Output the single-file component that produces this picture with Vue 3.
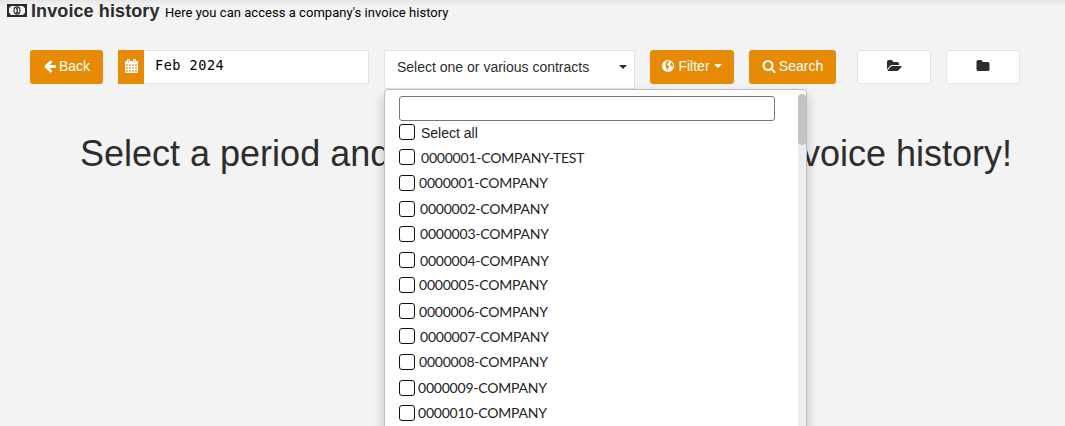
<script setup>
const rows = [
  { label: 'Select all', height: 25, indent: 6, drop: 0, plain: true },
  { label: '0000001-COMPANY-TEST', height: 26, indent: 6, drop: 0 },
  { label: '0000001-COMPANY', height: 26, indent: 4, drop: -1 },
  { label: '0000002-COMPANY', height: 25, indent: 5, drop: -1 },
  { label: '0000003-COMPANY', height: 26, indent: 5, drop: -1 },
  { label: '0000004-COMPANY', height: 25, indent: 5, drop: 0 },
  { label: '0000005-COMPANY', height: 26, indent: 4, drop: -1 },
  { label: '0000006-COMPANY', height: 25, indent: 4, drop: 0 },
  { label: '0000007-COMPANY', height: 26, indent: 5, drop: 0 },
  { label: '0000008-COMPANY', height: 26, indent: 4, drop: -1 },
  { label: '0000009-COMPANY', height: 25, indent: 3, drop: -1 },
  { label: '0000010-COMPANY', height: 26, indent: 3, drop: -1 },
]
</script>

<template>
  <div class="page">
    <header class="title">
      <svg class="money" viewBox="0 0 20 13" fill="none" stroke="#2b2b2b">
        <rect x="1" y="1" width="18" height="11" stroke-width="2" />
        <path d="M1 1H4Q4 4 1 4ZM19 1H16Q16 4 19 4ZM1 12H4Q4 9 1 9ZM19 12H16Q16 9 19 9Z" fill="#2b2b2b" stroke="none" />
        <ellipse cx="10" cy="6.5" rx="3" ry="3.6" stroke-width="1.1" />
        <path d="M9 5L10.2 4.2V8.6M8.8 8.6H11.4" stroke-width="1.2" />
      </svg>
      <h1>Invoice history</h1>
      <small>Here you can access a company's invoice history</small>
    </header>

    <div class="toolbar">
      <button class="btn back">
        <svg class="fa" viewBox="0 0 1792 1792"><path d="M1664 896v128q0 53-32.5 90.5t-84.5 37.5h-704l293 294q38 36 38 90t-38 90l-75 76q-37 37-90 37-52 0-91-37l-651-652q-37-37-37-90 0-52 37-91l651-650q38-38 91-38 52 0 90 38l75 74q38 38 38 91t-38 91l-293 293h704q52 0 84.5 37.5t32.5 90.5z" /></svg>
        <span>Back</span>
      </button>
      <div class="period">
        <span class="addon">
          <svg class="calendar" viewBox="0 0 13 14" fill="#fff">
            <path fill-rule="evenodd" d="M1 2H12Q13 2 13 3V13Q13 14 12 14H1Q0 14 0 13V3Q0 2 1 2ZM1 5V7H3V5ZM4 5V7H6V5ZM7 5V7H9V5ZM10 5V7H12V5ZM1 8V10H3V8ZM4 8V10H6V8ZM7 8V10H9V8ZM10 8V10H12V8ZM1 11V13H3V11ZM4 11V13H6V11ZM7 11V13H9V11ZM10 11V13H12V11Z" />
            <path fill-opacity=".42" d="M1 5H12V13H1Z" />
            <rect x="2" y="0" width="3" height="4" rx="1" />
            <rect x="8" y="0" width="3" height="4" rx="1" />
            <path fill="#e78b07" fill-opacity=".6" d="M3 1H4V3.5H3ZM9 1H10V3.5H9Z" />
          </svg>
        </span>
        <span class="month">Feb 2024</span>
      </div>
      <div class="contracts">
        <div class="select"><span>Select one or various contracts</span><i class="caret"></i></div>
        <div class="menu">
          <div class="filter-box"></div>
          <div v-for="row in rows" :key="row.label" class="row" :class="{ plain: row.plain }" :style="{ height: row.height + 'px' }">
            <span class="check"></span>
            <span class="label" :style="{ marginLeft: row.indent + 'px', marginTop: row.drop + 'px' }">{{ row.label }}</span>
          </div>
          <div class="track"><div class="thumb"></div></div>
        </div>
      </div>
      <button class="btn filter">
        <svg class="globe" viewBox="0 0 12 12">
          <circle cx="6" cy="6" r="6" fill="#fff" />
          <path d="M5.4 1.2L7 1 7.2 2 6 3.2 4.8 4.2 5 5 6.6 5.8 7.2 7 6 8.6 5.4 10.4 4.6 9.2 4.4 7.4 3.4 6.2 3.8 4.2 4 2.4ZM8.8 2.6L9.8 2.8 10.8 4.6 10.8 6.4 9.8 7.2 9.4 6 8.4 5.2 8.2 4Z" fill="#e78b07" />
        </svg>
        <span>Filter</span><i class="caret"></i>
      </button>
      <button class="btn search">
        <svg class="fa" viewBox="0 0 1792 1792"><path d="M1216 832q0-185-131.5-316.5t-316.5-131.5-316.5 131.5-131.5 316.5 131.5 316.5 316.5 131.5 316.5-131.5 131.5-316.5zm512 832q0 52-38 90t-90 38q-54 0-90-38l-343-342q-179 124-399 124-143 0-273.5-55.5t-225-150-150-225-55.5-273.5 55.5-273.5 150-225 225-150 273.5-55.5 273.5 55.5 225 150 150 225 55.5 273.5q0 220-124 399l343 343q37 37 37 90z" /></svg>
        <span>Search</span>
      </button>
      <button class="btn light open">
        <svg class="folder-open" viewBox="0 0 1920 1792"><path d="M1879 952q0 31-31 66l-336 396q-43 51-120.5 86.5t-143.5 35.5h-1088q-34 0-60.5-13t-26.5-43q0-31 31-66l336-396q43-51 120.5-86.5t143.5-35.5h1088q34 0 60.5 13t26.5 43zm-343-344v160h-832q-94 0-197 47.5t-164 119.5l-337 396-5 6q0-4-.5-12.5t-.5-12.5v-960q0-92 66-158t158-66h320q92 0 158 66t66 158v32h544q92 0 158 66t66 158z" /></svg>
      </button>
      <button class="btn light">
        <svg class="folder" viewBox="0 0 1792 1792"><path d="M1728 608v704q0 92-66 158t-158 66h-1216q-92 0-158-66t-66-158v-960q0-92 66-158t158-66h320q92 0 158 66t66 158v32h672q92 0 158 66t66 158z" /></svg>
      </button>
    </div>

    <h2 class="hint"><span>Select a period and</span><span>invoice history!</span></h2>
  </div>
</template>

<style>
body { background: #f3f3f3; overflow: hidden; }
</style>

<style scoped>
* { box-sizing: border-box; }
.page {
  width: 1065px;
  height: 426px;
  overflow: hidden;
  background: linear-gradient(#e6e6e6, #f3f3f3 6px);
  font: 14px/20px "Liberation Sans", Arial, sans-serif;
  color: #2d2d2d;
}
.title { display: flex; height: 50px; padding: 0 0 0 7px; align-items: flex-start; }
.money { width: 20px; height: 13px; margin-top: 4px; }
h1 { margin: 0 0 0 4px; width: 134px; font-size: 18px; line-height: 22px; font-weight: 700; letter-spacing: .1px; white-space: nowrap; }
small { font: 13px/20px Roboto, sans-serif; letter-spacing: .04px; color: #000; margin-top: 3px; white-space: nowrap; }
.toolbar { display: flex; align-items: flex-start; padding-left: 30px; height: 84px; }
.btn {
  display: flex; align-items: center; justify-content: center;
  height: 34px; padding: 0 0 2px; border: 0; border-radius: 3px;
  background: #e78b07; color: #fff; font: inherit; white-space: nowrap;
}
.fa { width: 14px; height: 14px; fill: currentColor; flex: none; }
.calendar { width: 13px; height: 14px; }
.back { width: 73px; margin-right: 15px; gap: 2px; }
.period { display: flex; width: 251px; height: 34px; margin-right: 15px; }
.addon { width: 26px; padding-bottom: 2px; background: #e78b07; color: #fff; display: flex; align-items: center; justify-content: center; }
.month {
  flex: 1; border: 1px solid #e3e3e3; border-left: 0; background: #fff; color: #000;
  padding: 4px 0 0 11px; font: 13.5px/20px "DejaVu Sans Mono", monospace; letter-spacing: .52px;
}
.contracts { position: relative; width: 251px; margin-right: 15px; }
.select {
  display: flex; align-items: center; justify-content: space-between;
  height: 39px; padding: 0 7px 5px 12px; border: 1px solid #e3e3e3; background: #fff;
}
.caret { width: 0; border: 4px solid transparent; border-top-color: currentColor; border-bottom: 0; }
.menu {
  position: absolute; left: 0; top: 39px; z-index: 2; width: 423px; height: 360px;
  padding: 6px 0 0 14px; background: #fff; border: 1px solid #bdbdbd; border-radius: 4px;
  box-shadow: 0 6px 12px rgba(0, 0, 0, .22);
}
.filter-box { width: 376px; height: 25px; border: 1px solid #767676; border-radius: 3px; margin-bottom: 3px; }
.row { display: flex; align-items: flex-start; }
.check { flex: none; width: 16px; height: 16px; border: 1px solid #111; border-radius: 3px; }
.label { font: 14px/18px Lato, sans-serif; letter-spacing: -.22px; color: #222; white-space: nowrap; }
.plain .label { font: 14px/18px "Liberation Sans", Arial, sans-serif; letter-spacing: 0; }
.track { position: absolute; right: 0; top: 4px; width: 8px; height: 360px; background: #ededed; border-radius: 4px 4px 0 0; }
.thumb { height: 51px; border-radius: 4px; background: #c3c3c3; }
.filter { width: 84px; margin-right: 15px; }
.filter .globe { width: 12px; height: 12px; margin-right: 4px; }
.filter .caret { margin-left: 4px; }
.search { width: 87px; margin-right: 21px; gap: 3px; }
.light { width: 74px; background: #fff; border: 1px solid #e3e3e3; color: #2d2d2d; fill: currentColor; }
.open { margin-right: 15px; }
.folder-open { width: 15px; height: 14px; }
.folder { width: 14px; height: 14px; }
.hint {
  display: flex; justify-content: space-between; width: 932px; margin: 0 0 0 80px;
  font-size: 36px; line-height: 40px; font-weight: 400; white-space: nowrap;
}
</style>
